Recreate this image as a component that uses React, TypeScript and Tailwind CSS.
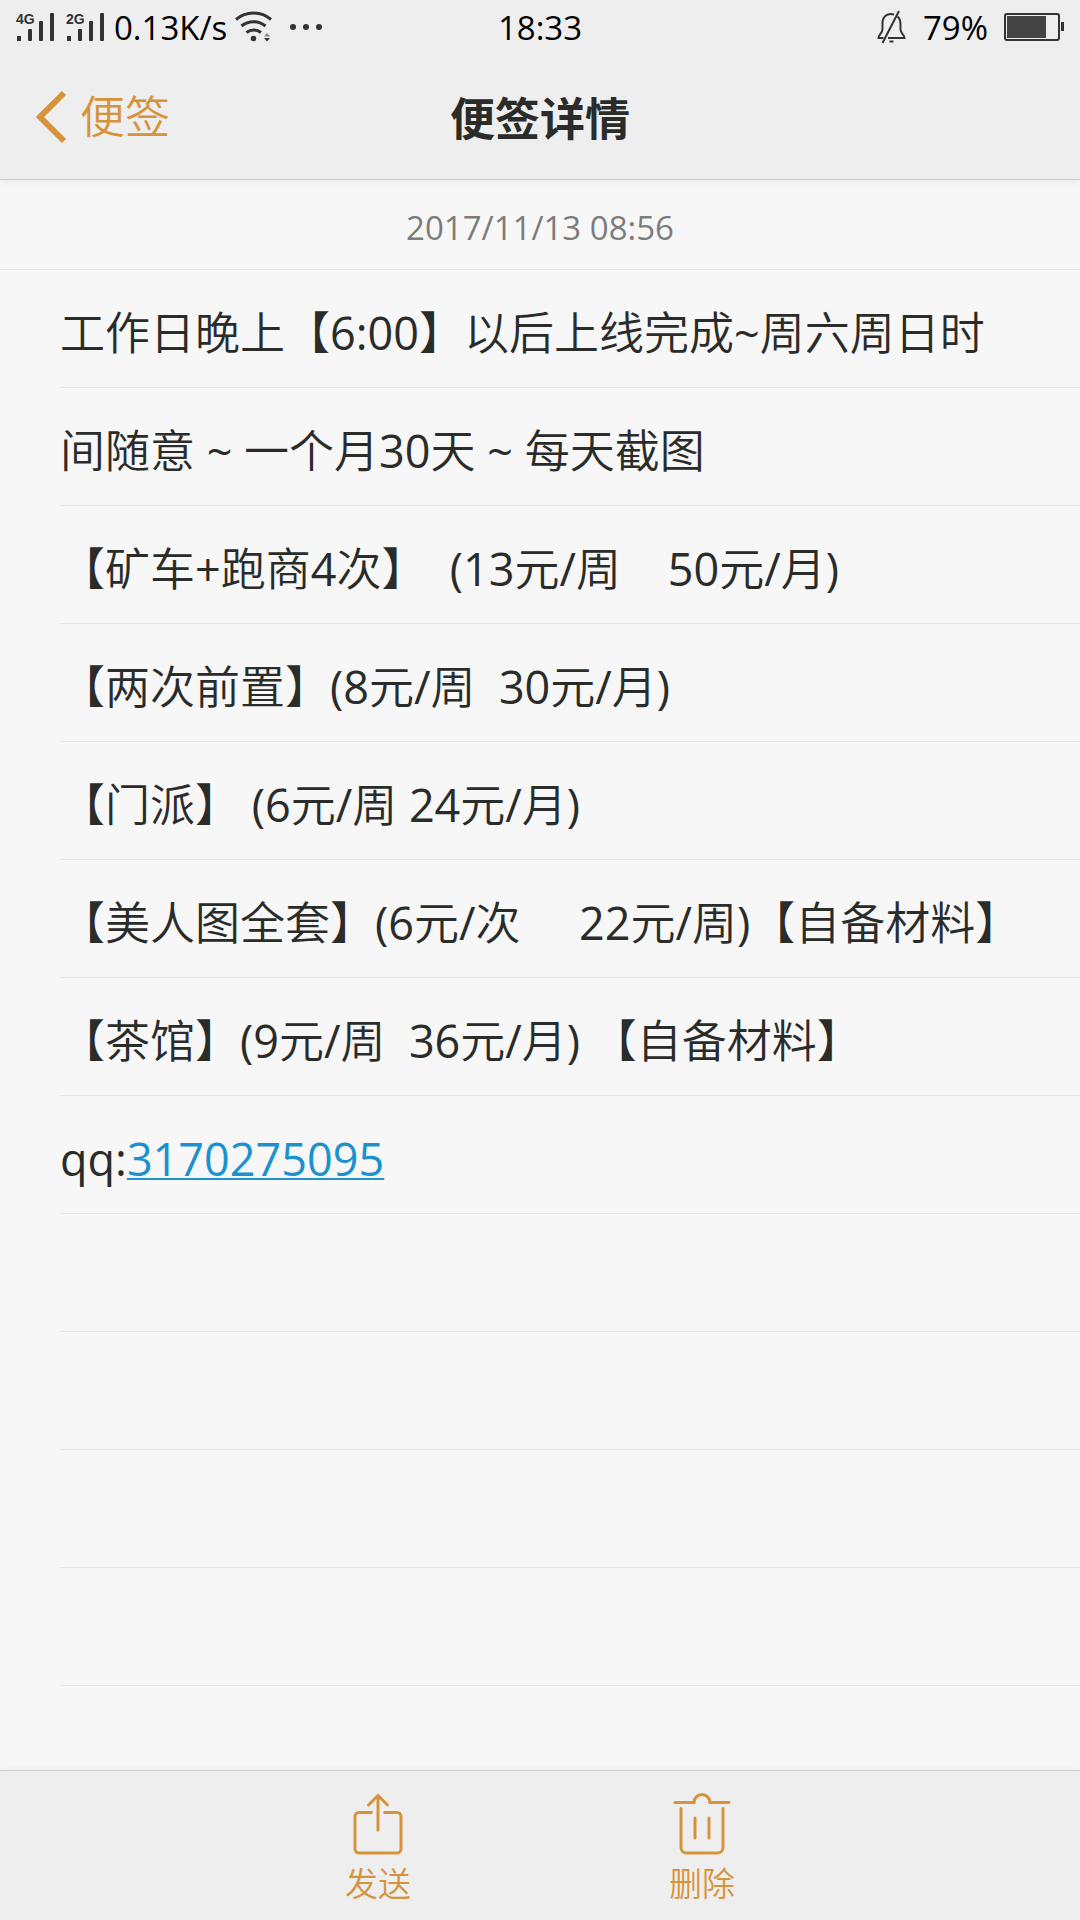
type SignalProps = {
  network: string
}

const noteLines = [
  "工作日晚上【6:00】以后上线完成~周六周日时",
  "间随意 ~ 一个月30天 ~ 每天截图",
  "【矿车+跑商4次】  (13元/周    50元/月)",
  "【两次前置】(8元/周  30元/月)",
  "【门派】 (6元/周 24元/月)",
  "【美人图全套】(6元/次     22元/周)【自备材料】",
  "【茶馆】(9元/周  36元/月) 【自备材料】",
]

const emptyLines = [1, 2, 3, 4]

function Signal({ network }: SignalProps) {
  return (
    <svg width="40" height="32" viewBox="0 0 40 32" fill="#333333" aria-hidden="true">
      <text x="0" y="13" fontSize="14" fontWeight="bold" fontFamily="Liberation Sans, sans-serif">
        {network}
      </text>
      <rect x="1" y="25" width="4" height="5" />
      <rect x="12" y="18" width="4" height="12" rx="1" />
      <rect x="23" y="10" width="4" height="20" rx="1" />
      <rect x="34" y="2" width="4" height="28" rx="1" />
    </svg>
  )
}

function WifiIcon() {
  return (
    <svg width="38" height="32" viewBox="0 0 38 32" fill="none" stroke="#333333" strokeWidth="3" aria-hidden="true">
      <path d="M1 8.500a27 27 0 0 1 35 0" />
      <path d="M6.500 15a19 19 0 0 1 24 0" />
      <path d="M11.500 21.500a11.500 11.500 0 0 1 14.500 0" />
      <circle cx="18.500" cy="27.500" r="2.800" fill="#333333" stroke="none" />
      <path d="M29 25.500l3-3.500 3 3.500z" fill="#888888" stroke="none" />
      <path d="M29 27l3 3.500 3-3.500z" fill="#333333" stroke="none" />
    </svg>
  )
}

function MutedBellIcon() {
  return (
    <svg width="30" height="34" viewBox="0 0 30 34" fill="none" stroke="#333333" strokeWidth="2" aria-hidden="true">
      <path d="M17 4.500C10 2.500 5.500 7 5.500 13v6c0 4-4 5.500-4 9h5" />
      <path d="M20.500 6.500c2.500 2 3 5 3 8v5c0 4 4 5 4 8.500H11" />
      <path d="M22 1L5.500 33" />
      <path d="M12.500 31.500h4" />
    </svg>
  )
}

function BatteryIcon() {
  return (
    <svg width="60" height="28" viewBox="0 0 60 28" aria-hidden="true">
      <rect x="1" y="1" width="54" height="26" rx="2" fill="none" stroke="#333333" strokeWidth="2" />
      <rect x="3" y="3" width="39" height="22" fill="#444444" />
      <rect x="57" y="9" width="3" height="9" fill="#333333" />
    </svg>
  )
}

function StatusBar() {
  return (
    <div className="flex h-[54px] items-center px-4 text-[33px] leading-none text-black">
      <div className="flex flex-1 items-center gap-2">
        <div className="flex gap-2.5">
          <Signal network="4G" />
          <Signal network="2G" />
        </div>
        <span>0.13K/s</span>
        <WifiIcon />
        <svg className="ml-2" width="34" height="8" viewBox="0 0 34 8" fill="#333333" aria-hidden="true">
          <circle cx="4" cy="4" r="3" />
          <circle cx="17" cy="4" r="3" />
          <circle cx="30" cy="4" r="3" />
        </svg>
      </div>
      <span>18:33</span>
      <div className="flex flex-1 items-center justify-end gap-4">
        <MutedBellIcon />
        <span>79%</span>
        <BatteryIcon />
      </div>
    </div>
  )
}

export default function App() {
  return (
    <div className="flex min-h-screen flex-col bg-[#f7f7f7] font-['Open_Sans','Noto_Sans_CJK_SC_DemiLight','Noto_Sans_CJK_SC',sans-serif] text-[#2a2c2a]">
      <header className="border-b border-[#c8c8c8] bg-[#eeeeee] shadow-[0_2px_6px_rgba(0,0,0,0.05)]">
        <StatusBar />
        {/* Title bar */}
        <div className="grid h-[125px] grid-cols-3 items-center px-9 text-[45px] leading-none">
          <button type="button" className="flex items-center gap-3 text-[#d6933c]">
            <svg width="32" height="54" viewBox="0 0 32 54" fill="none" stroke="currentColor" strokeWidth="6" aria-hidden="true">
              <path d="M28 3L4 27l24 24" />
            </svg>
            便签
          </button>
          <h1 className="text-center font-['Noto_Sans_CJK_SC',sans-serif] font-bold">便签详情</h1>
        </div>
      </header>

      {/* Note */}
      <main className="flex-1">
        <p className="flex h-[90px] items-center justify-center border-b border-[#e4e4e4] pt-1.5 text-[33px] text-[#7c7c7c]">
          2017/11/13 08:56
        </p>
        <div className="pl-[60px] text-[45px] leading-none">
          {noteLines.map((line) => (
            <p key={line} className="flex h-[118px] items-center border-b border-[#e4e4e4] pt-2 whitespace-pre">
              {line}
            </p>
          ))}
          <p className="flex h-[118px] items-center border-b border-[#e4e4e4] pt-2">
            qq:
            <a href="tel:3170275095" className="text-[#1a92cf] underline decoration-2 underline-offset-2">
              3170275095
            </a>
          </p>
          {emptyLines.map((line) => (
            <div key={line} className="h-[118px] border-b border-[#e4e4e4]" />
          ))}
        </div>
      </main>

      {/* Bottom actions */}
      <footer className="flex h-[150px] justify-center border-t border-[#d0d0d0] bg-[#eeeeee] text-[33px] leading-none text-[#d6933c] shadow-[0_-2px_6px_rgba(0,0,0,0.04)]">
        <button type="button" className="flex w-[30%] flex-col items-center gap-3 pt-[22px]">
          <svg width="50" height="62" viewBox="0 0 50 62" fill="none" stroke="currentColor" strokeWidth="3" strokeLinecap="round" aria-hidden="true">
            <path d="M25 37V3M15.500 12L25 2.500 34.500 12" />
            <path d="M19.500 19.500H6A4 4 0 0 0 2 23.500v32.500a4 4 0 0 0 4 4h38a4 4 0 0 0 4-4V23.500a4 4 0 0 0-4-4H30.500" strokeLinecap="butt" />
          </svg>
          发送
        </button>
        <button type="button" className="flex w-[30%] flex-col items-center gap-3 pt-[22px]">
          <svg width="58" height="62" viewBox="0 0 58 62" fill="none" stroke="currentColor" strokeWidth="3" strokeLinecap="round" aria-hidden="true">
            <path d="M2 9.500H21a8 8 0 0 1 16 0H56" />
            <path d="M8 15.500v39a5.500 5.500 0 0 0 5.500 5.500h31a5.500 5.500 0 0 0 5.500-5.500v-39" />
            <path d="M22 25v20M36 25v20" />
          </svg>
          删除
        </button>
      </footer>
    </div>
  )
}
